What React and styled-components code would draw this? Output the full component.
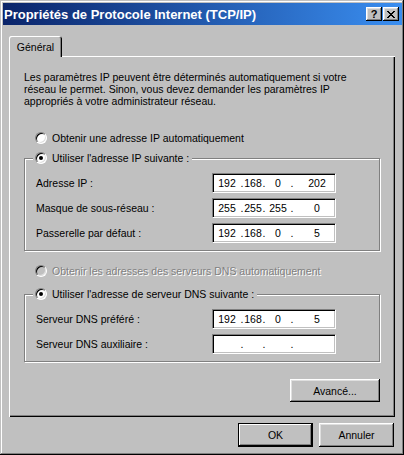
import React from 'react';
import styled, { createGlobalStyle } from 'styled-components';

const GlobalStyle = createGlobalStyle`
  html, body {
    margin: 0;
    padding: 0;
    background: #c0c0c0;
  }
  body {
    font-family: "Liberation Sans", Arial, sans-serif;
    font-size: 10.5px;
    color: #000;
  }
  * {
    box-sizing: border-box;
  }
`;

const raised = 'inset -1px -1px #000, inset 1px 1px #fff, inset -2px -2px #808080, inset 2px 2px #dfdfdf';

const Window = styled.div`
  width: 404px;
  height: 455px;
  display: flex;
  flex-direction: column;
  padding: 3px 2px 2px 3px;
  background: #c0c0c0;
  box-shadow: inset -1px -1px #000, inset 1px 1px #c0c0c0, inset -2px -2px #808080, inset 2px 2px #fff;
`;

const TitleBar = styled.div`
  height: 22px;
  display: flex;
  align-items: center;
  padding: 0 3px 0 1px;
  background: linear-gradient(to right, #0a246a, #3a8ef0);
`;

const Title = styled.span`
  flex: 1;
  color: #fff;
  font-weight: bold;
  font-size: 13px;
  white-space: nowrap;
`;

const CaptionButtons = styled.div`
  display: flex;
  gap: 1px;
`;

const CaptionButton = styled.button`
  width: 16px;
  height: 14px;
  padding: 0;
  border: none;
  display: flex;
  align-items: center;
  justify-content: center;
  background: #c0c0c0;
  box-shadow: ${raised};
  font: bold 11px "Liberation Sans", Arial, sans-serif;
  color: #000;
`;

const Body = styled.div`
  flex: 1;
  display: flex;
  flex-direction: column;
  padding: 11px 7px 6px 6px;
`;

const TabStrip = styled.div`
  display: flex;
`;

const Tab = styled.div`
  position: relative;
  z-index: 1;
  width: 53px;
  height: 21px;
  margin-bottom: -1px;
  display: flex;
  align-items: center;
  justify-content: center;
  background: #c0c0c0;
  border-radius: 2px 3px 0 0;
  box-shadow: inset 1px 1px #fff, inset -1px 0 #000, inset -2px 0 #808080;
`;

const Panel = styled.div`
  flex: 1;
  display: flex;
  flex-direction: column;
  padding: 15px;
  background: #c0c0c0;
  box-shadow: inset 1px 1px #fff, inset -1px -1px #000, inset -2px -2px #808080;
`;

const Intro = styled.p`
  margin: 0;
  line-height: 12px;
`;

const RadioRow = styled.label`
  display: flex;
  align-items: center;
  gap: 5px;
  height: 16px;
  margin-top: ${p => p.$top || 0}px;
  padding-left: 11px;
  color: ${p => (p.$disabled ? '#808080' : '#000')};
  text-shadow: ${p => (p.$disabled ? '1px 1px 0 #fff' : 'none')};
  white-space: nowrap;
`;

const Radio = styled.span`
  position: relative;
  flex: none;
  width: 12px;
  height: 12px;
  border-radius: 50%;
  border: 1px solid;
  border-color: #808080 #fff #fff #808080;
  box-shadow: inset 1px 1px #000, inset -1px -1px #dfdfdf;
  background: ${p => (p.$disabled ? '#c0c0c0' : '#fff')};

  &::after {
    content: '';
    display: ${p => (p.$checked ? 'block' : 'none')};
    position: absolute;
    left: 3px;
    top: 3px;
    width: 4px;
    height: 4px;
    border-radius: 50%;
    background: #000;
  }
`;

const Group = styled.fieldset`
  margin: ${p => p.$top}px 0 0;
  padding: 7px 10px 7px 11px;
  min-width: 0;
  border: 1px solid #808080;
  box-shadow: inset 1px 1px #fff, 1px 1px #fff;
`;

const Legend = styled.legend`
  display: flex;
  align-items: center;
  gap: 5px;
  height: 16px;
  margin-left: -3px;
  padding: 0 3px 0 2px;
  background: #c0c0c0;
  white-space: nowrap;
`;

const Fields = styled.div`
  display: grid;
  grid-template-columns: 176px 124px;
  row-gap: 5px;
  align-items: center;
`;

const IpBox = styled.div`
  display: grid;
  grid-template-columns: 26px 4px 18px 4px 24px 4px 1fr;
  align-items: center;
  height: 20px;
  padding: 0 1px;
  background: #fff;
  border: 1px solid;
  border-color: #808080 #fff #fff #808080;
  box-shadow: inset 1px 1px #000, inset -1px -1px #c0c0c0;
`;

const Octet = styled.span`
  text-align: center;
  padding-left: ${p => (p.$last ? 6 : 0)}px;
`;

const Dot = styled.span`
  text-align: center;
`;

const Button = styled.button`
  width: ${p => p.$w || 75}px;
  height: ${p => p.$h || 23}px;
  padding: 0;
  border: none;
  background: #c0c0c0;
  font: 10.5px "Liberation Sans", Arial, sans-serif;
  color: #000;
  box-shadow: ${p =>
    p.$default
      ? 'inset 0 0 0 1px #000, inset -2px -2px #000, inset 2px 2px #fff, inset -3px -3px #808080'
      : raised};
`;

const AdvancedButton = styled(Button)`
  align-self: flex-end;
  margin-top: auto;
`;

const Footer = styled.div`
  display: flex;
  justify-content: flex-end;
  gap: 6px;
  padding: 6px 1px 0 0;
`;

const CloseGlyph = () => (
  <svg width="8" height="7" viewBox="0 0 8 7" shapeRendering="crispEdges">
    <path d="M0 0h2v1h1v1h2V1h1V0h2v1H7v1H6v1H5v1h1v1h1v1h1v1H6V6H5V5H3v1H2v1H0V6h1V5h1V4h1V3H2V2H1V1H0z" fill="#000" />
  </svg>
);

const IpField = ({ parts }) => (
  <IpBox>
    <Octet>{parts[0]}</Octet>
    <Dot>.</Dot>
    <Octet>{parts[1]}</Octet>
    <Dot>.</Dot>
    <Octet>{parts[2]}</Octet>
    <Dot>.</Dot>
    <Octet $last>{parts[3]}</Octet>
  </IpBox>
);

const ipRows = [
  { label: 'Adresse IP :', parts: ['192', '168', '0', '202'] },
  { label: 'Masque de sous-réseau :', parts: ['255', '255', '255', '0'] },
  { label: 'Passerelle par défaut :', parts: ['192', '168', '0', '5'] },
];

const dnsRows = [
  { label: 'Serveur DNS préféré :', parts: ['192', '168', '0', '5'] },
  { label: 'Serveur DNS auxiliaire :', parts: ['', '', '', ''] },
];

const FieldList = ({ rows }) => (
  <Fields>
    {rows.map(row => (
      <React.Fragment key={row.label}>
        <span>{row.label}</span>
        <IpField parts={row.parts} />
      </React.Fragment>
    ))}
  </Fields>
);

const App = () => (
  <>
    <GlobalStyle />
    <Window>
      <TitleBar>
        <Title>Propriétés de Protocole Internet (TCP/IP)</Title>
        <CaptionButtons>
          <CaptionButton>?</CaptionButton>
          <CaptionButton>
            <CloseGlyph />
          </CaptionButton>
        </CaptionButtons>
      </TitleBar>
      <Body>
        <TabStrip>
          <Tab>Général</Tab>
        </TabStrip>
        <Panel>
          <Intro>
            Les paramètres IP peuvent être déterminés automatiquement si votre
            <br />
            réseau le permet. Sinon, vous devez demander les paramètres IP
            <br />
            appropriés à votre administrateur réseau.
          </Intro>
          <RadioRow $top={23}>
            <Radio />
            Obtenir une adresse IP automatiquement
          </RadioRow>
          <Group $top={4}>
            <Legend>
              <Radio $checked />
              Utiliser l'adresse IP suivante :
            </Legend>
            <FieldList rows={ipRows} />
          </Group>
          <RadioRow $top={12} $disabled>
            <Radio $disabled />
            Obtenir les adresses des serveurs DNS automatiquement
          </RadioRow>
          <Group $top={7}>
            <Legend>
              <Radio $checked />
              Utiliser l'adresse de serveur DNS suivante :
            </Legend>
            <FieldList rows={dnsRows} />
          </Group>
          <AdvancedButton $w={90}>Avancé...</AdvancedButton>
        </Panel>
        <Footer>
          <Button $default $h={24}>OK</Button>
          <Button $h={24}>Annuler</Button>
        </Footer>
      </Body>
    </Window>
  </>
);

export default App;
